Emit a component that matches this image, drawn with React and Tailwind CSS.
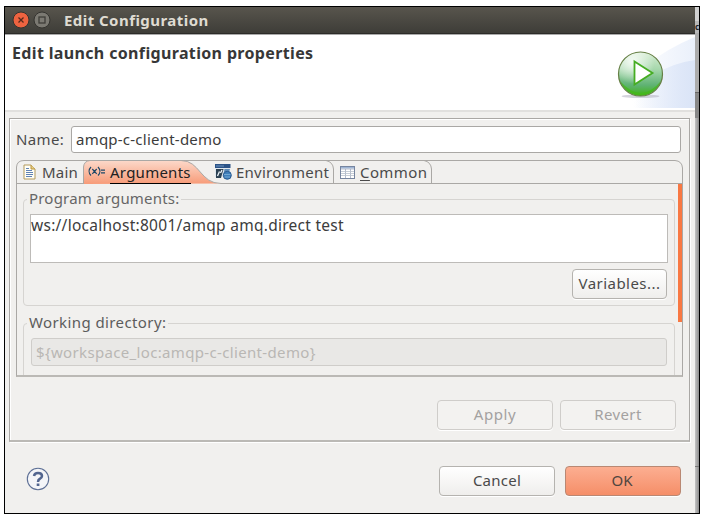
import React from "react";

const btn =
  "flex items-center justify-center rounded-[4px] border text-[15px] whitespace-nowrap pb-px shadow-[0_1px_0_#fff]";

function DocIcon() {
  return (
    <svg width="13" height="16" viewBox="0 0 13 16">
      <path d="M1 1h7l4 4v10H1z" fill="#fffef6" stroke="#b39a5c" />
      <path d="M8 1v4h4" fill="#e9cf86" stroke="#b8953f" />
      <path d="M3 4.5h3M3 6.5h6M3 8.5h7M3 10.5h7M3 12.5h6" stroke="#5f82b5" />
    </svg>
  );
}

function VarIcon() {
  return (
    <svg width="18" height="12" viewBox="0 0 18 12" fill="none" stroke="#1d4868" strokeWidth="1.2">
      <path d="M3 1C.5 3.5.5 7 3 9.500M10 1c2.500 2.500 2.500 6 0 8.500M4.300 3l4.400 4.800M8.700 3L4.300 7.800" />
      <path d="M13 4.200h4M13 6.800h4" />
    </svg>
  );
}

function EnvIcon() {
  return (
    <svg width="17" height="16" viewBox="0 0 17 16">
      <path d="M0 1h15v12H0z" fill="#dfe7ee" />
      <path d="M0 0h15.500v4H0z" fill="#2b5387" />
      <path d="M1 2h8" stroke="#6f95bf" />
      <path d="M1 5h7.500L6 14H1z" fill="#2c4152" />
      <path d="M9.500 5H15L14 8H9z" fill="#5c8bb9" />
      <path d="M2.500 12L4.500 7.500M5.500 9L7 6" stroke="#eef5fa" fill="none" strokeWidth="1.300" />
      <circle cx="12.300" cy="11.300" r="4" fill="#3f7fba" stroke="#28598f" />
      <path d="M9 10.500h6.500M9.500 13h5.500" stroke="#7fb2dc" strokeWidth=".8" />
    </svg>
  );
}

function TableIcon() {
  return (
    <svg width="15" height="13" viewBox="0 0 15 13">
      <rect x=".5" y=".5" width="14" height="12" fill="#fff" stroke="#76859f" />
      <path d="M1 1h13v1.500H1z" fill="#9db4d4" />
      <path d="M1 3h13M5.500 3v9M10.500 3v9" stroke="#a3adc0" fill="none" strokeWidth=".8" />
      <path d="M1 5.500h13M1 7.500h13M1 9.500h13" stroke="#b9c1cd" strokeWidth=".8" />
    </svg>
  );
}

function RunBanner() {
  return (
    <svg width="90" height="74" viewBox="0 0 90 74">
      <defs>
        <linearGradient id="sky" x1="0" x2="1">
          <stop offset=".3" stopColor="#fff" />
          <stop offset="1" stopColor="#eaf0fb" />
        </linearGradient>
        <linearGradient id="sky2" x1="0" x2="1">
          <stop offset=".2" stopColor="#dbe5f8" stopOpacity="0" />
          <stop offset="1" stopColor="#dae4f7" />
        </linearGradient>
        <linearGradient id="ball" x1="0" x2="0" y1="0" y2="1">
          <stop offset="0" stopColor="#d5ecd2" />
          <stop offset=".4" stopColor="#a5d7ab" />
          <stop offset=".75" stopColor="#5fb274" />
          <stop offset="1" stopColor="#3fb412" />
        </linearGradient>
        <radialGradient id="shine" cx=".32" cy=".22" r=".5">
          <stop offset="0" stopColor="#fff" stopOpacity=".85" />
          <stop offset="1" stopColor="#fff" stopOpacity="0" />
        </radialGradient>
      </defs>
      <path d="M0 73Q36 24 90 2v71z" fill="url(#sky)" />
      <path d="M14 73Q45 31 90 25v48z" fill="url(#sky2)" />
      <ellipse cx="35.500" cy="61.300" rx="19" ry="1.800" fill="#b7b5c4" opacity=".6" />
      <circle cx="35.500" cy="39" r="22" fill="url(#ball)" />
      <path d="M15 46A22 22 0 0 0 56 46Q36 70 15 46" fill="#45b81a" opacity=".75" />
      <circle cx="35.500" cy="39" r="22" fill="url(#shine)" stroke="#667f45" strokeWidth="1.200" />
      <path d="M29.500 26.500l18 11.500L29.500 49.500z" fill="#fff" stroke="#46ad22" strokeWidth="1.800" />
    </svg>
  );
}

function TabBar() {
  return (
    <div className="relative h-[24px] w-[667px]">
      <svg className="absolute left-0 top-0" width="667" height="24" viewBox="0 0 667 24" fill="none">
        <defs>
          <linearGradient id="act" x1="0" x2="0" y1="0" y2="1">
            <stop offset="0" stopColor="#fcd9ca" />
            <stop offset="1" stopColor="#f79b78" />
          </linearGradient>
        </defs>
        <path d="M67.500 24V7Q68 1 74 .5H165C184 .5 184 23.500 205 23.500z" fill="url(#act)" />
        <path d="M.5 24V7Q1 .5 8 .5H659Q666 1 666.500 8V24M67.500 24V7Q68 1 74 .5M165 .5C184 .5 184 23.500 205 23.500H667M0 23.500H67" stroke="#aaa8a5" />
        <path d="M310 .5Q317 2 317.500 9V23M408 .5Q415 2 415.500 9V23" stroke="#aaa8a5" />
      </svg>
      <div className="relative flex h-[24px] items-center text-[15px] whitespace-nowrap">
        <div className="ml-[7px] flex w-[65px] items-center gap-[6px]">
          <DocIcon />
          <span className="tracking-[0.2px]">Main</span>
        </div>
        <div className="flex w-[127px] items-center gap-[4px] text-[#222]">
          <VarIcon />
          <span className="mt-[2px] border-b border-black leading-[21px] tracking-[0.25px]">Arguments</span>
        </div>
        <div className="flex w-[125px] items-center gap-[4px]">
          <EnvIcon />
          <span className="tracking-[0.25px]">Environment</span>
        </div>
        <div className="flex items-center gap-[5px]">
          <TableIcon />
          <span className="tracking-[0.4px]">
            <span className="underline underline-offset-2">C</span>ommon
          </span>
        </div>
      </div>
    </div>
  );
}

export default function App() {
  return (
    <div className="h-[517px] w-[704px] overflow-hidden bg-white pl-[4px] pt-[6px] font-['Noto_Sans',sans-serif] text-[15px] text-[#4a4a4a]">
      <div className="flex h-[508px] w-[696px] border border-black bg-[#a0a0a0]">
        <div className="flex w-[690px] shrink-0 flex-col bg-[#f1f0ee]">
          <div className="flex h-[27px] items-center border-b border-[#2c2b28] bg-linear-to-b from-[#58554d] to-[#3e3d38] pl-[7px]">
            <svg width="40" height="18" viewBox="0 0 40 18">
              <circle cx="9" cy="9" r="8" fill="#ee6340" stroke="#34332f" />
              <path d="M6.500 6.500l5 5M11.500 6.500l-5 5" stroke="#57291b" strokeWidth="1.300" />
              <circle cx="30" cy="9" r="8" fill="#7b7972" stroke="#34332f" />
              <rect x="27" y="6" width="6" height="6" fill="none" stroke="#3e3d38" strokeWidth="1.300" />
            </svg>
            <span className="ml-[12px] whitespace-nowrap text-[15px] font-bold tracking-[0.45px] text-[#dfdbd2]">Edit Configuration</span>
          </div>
          <div className="flex h-[76px] justify-between border-t border-[#aaa] bg-white pl-[7px]">
            <h1 className="mt-[7px] whitespace-nowrap text-[16px] leading-[23px] font-bold tracking-[0.35px] text-[#373737]">Edit launch configuration properties</h1>
            <RunBanner />
          </div>
          <div className="h-[3px] border-t-2 border-[#e1e0de]" />
          <div className="ml-[4px] mt-[5px] h-[324px] w-[681px] border border-[#aaa8a5] border-b-2 border-b-[#bbb9b5] pl-[6px] pt-[7px] shadow-[1px_1px_0_#fff,inset_1px_1px_0_#fff]">
            <div className="flex h-[27px] items-center">
              <label className="w-[55px] whitespace-nowrap tracking-[0.35px]">Name:</label>
              <div className="flex h-[27px] w-[610px] items-center rounded-[3px] border border-[#aaa8a5] bg-white pl-[4px] text-[#3c3c3c]">
                <span className="tracking-[0.23px]">amqp-c-client-demo</span>
              </div>
            </div>
            <div className="mt-[7px] h-[217px] w-[667px]">
              <TabBar />
              <div className="flex h-[193px] overflow-hidden border border-t-0 border-[#aaa8a5] border-b-2 border-b-[#bbb9b5]">
                <div className="w-[661px] pl-[6px]">
                  <fieldset className="mt-[5px] h-[117px] w-[652px] rounded-[4px] border border-[#d6d4d1] px-[6px]">
                    <legend className="-ml-[3px] h-[20px] whitespace-nowrap px-[2px] leading-[19px] tracking-[0.2px] text-[#666]">Program arguments:</legend>
                    <div className="mt-[5px] h-[49px] w-[638px] border border-[#bdbbb8] bg-white leading-[21px] text-[#3c3c3c]">
                      <span className="whitespace-nowrap text-[15.5px] tracking-[0.27px]">ws://localhost:8001/amqp amq.direct test</span>
                    </div>
                    <button className={btn + " ml-[542px] mt-[6px] h-[30px] w-[95px] border-[#b5b3af] bg-linear-to-b from-white to-[#efeeec] text-[#4a4a4a]"}>
                      <span className="tracking-[0.45px]">Variables...</span>
                    </button>
                  </fieldset>
                  <fieldset className="mt-[7px] h-[90px] w-[652px] rounded-[4px] border border-[#d6d4d1] px-[7px]">
                    <legend className="-ml-[4px] h-[21px] whitespace-nowrap px-[2px] leading-[19px] tracking-[0.4px] text-[#5c5c5c]">Working directory:</legend>
                    <div className="mt-[4px] flex h-[28px] w-[636px] items-center rounded-[3px] border border-[#cfcdca] bg-[#e9e8e6] pl-[4px] text-[#b9b7b4]">
                      <span className="tracking-[0.34px]">{"${workspace_loc:amqp-c-client-demo}"}</span>
                    </div>
                  </fieldset>
                </div>
                <div className="h-[138px] w-[4px] bg-[#f87843]" />
              </div>
            </div>
            <div className="mt-[23px] flex gap-[7px] pl-[421px]">
              <button className={btn + " h-[30px] w-[116px] border-[#cfcdca] bg-[#f3f2f0] text-[#a3a1a0]"}>
                <span className="tracking-[0.6px]">Apply</span>
              </button>
              <button className={btn + " h-[30px] w-[116px] border-[#cfcdca] bg-[#f3f2f0] text-[#a3a1a0]"}>
                <span className="tracking-[0.4px]">Revert</span>
              </button>
            </div>
          </div>
          <div className="mt-[24px] flex h-[30px] items-center pl-[21px]">
            <svg className="mb-[4px]" width="24" height="24" viewBox="0 0 24 24" fill="none">
              <circle cx="12" cy="12" r="10.700" fill="#f4f5f8" stroke="#5d6f95" strokeWidth="1.100" />
              <path d="M8 9Q8.500 6 12 6q4 0 4 3 0 1.500-2 2.700-2 1.100-2 3.300" stroke="#52658f" strokeWidth="2.500" />
              <rect x="10.700" y="16.500" width="2.700" height="2.500" fill="#52658f" />
            </svg>
            <button className={btn + " ml-[389px] h-[30px] w-[116px] border-[#b5b3af] bg-linear-to-b from-white to-[#efeeec] text-[#4a4a4a]"}>
              <span className="tracking-[0.25px]">Cancel</span>
            </button>
            <button className={btn + " ml-[10px] h-[30px] w-[116px] border-[#b98873] bg-linear-to-b from-[#fcae91] to-[#f58e68] text-[#504640]"}>
              <span className="mr-[2px]">OK</span>
            </button>
          </div>
        </div>
        <div className="flex grow flex-col">
          <div className="h-[14px] bg-[#d0d0d0]" />
          <div className="h-[12px] w-[4px] bg-[#b8b8b8] text-[8px] leading-[12px] tracking-[-0.5px] font-bold text-[#222]">c</div>
          <div className="h-[59px] bg-[#ababab]" />
          <div className="h-px bg-[#666]" />
          <div className="h-[25px] bg-[#888]" />
          <div className="h-[348px] bg-linear-to-r from-[#c4c4c4] to-[#8c8c8c]" />
          <div className="h-px bg-[#777]" />
          <div className="grow bg-linear-to-r from-[#c4c4c4] to-[#8c8c8c]" />
        </div>
      </div>
    </div>
  );
}
